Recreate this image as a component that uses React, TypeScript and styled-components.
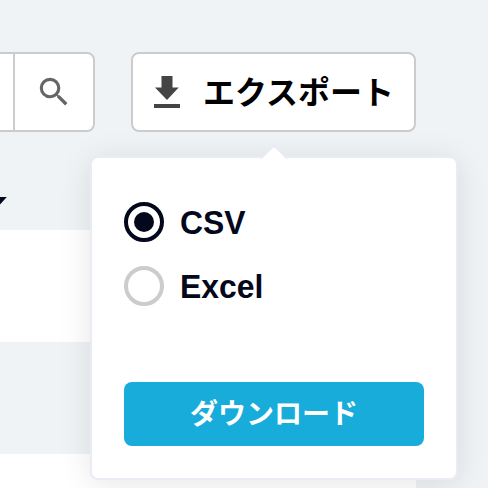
import React, { useState } from "react";
import styled, { createGlobalStyle } from "styled-components";

const GlobalStyle = createGlobalStyle`
  *, *::before, *::after { box-sizing: border-box; }
  body {
    margin: 0;
    overflow: hidden;
    background: #eff3f6;
    font-family: "Liberation Sans", "Noto Sans CJK JP", sans-serif;
  }
  button { font-family: inherit; margin: 0; padding: 0; }
`;

const Page = styled.main`
  width: 488px;
  height: 488px;
  overflow: hidden;
  display: flex;
  flex-direction: column;
  background: #eff3f6;
`;

const Toolbar = styled.header`
  display: flex;
  gap: 36px;
  padding-top: 52px;
`;

const SearchGroup = styled.div`
  display: flex;
  width: 95px;
  height: 80px;
  border: 2px solid #ccc;
  border-left: 0;
  border-radius: 0 8px 8px 0;
  background: #fff;
`;

const SearchField = styled.div`
  width: 15px;
  border-right: 2px solid #ccc;
`;

const SearchButton = styled.button`
  flex: 1;
  display: flex;
  align-items: center;
  justify-content: center;
  border: 0;
  background: none;
`;

const ExportAnchor = styled.div`
  position: relative;
`;

const ExportButton = styled.button`
  display: flex;
  align-items: center;
  width: 285px;
  height: 80px;
  padding-left: 20px;
  gap: 23px;
  border: 2px solid #ccc;
  border-radius: 8px;
  background: #fff;
  color: #000;
`;

const ExportLabel = styled.span`
  margin-left: -1px;
  padding-top: 2px;
  font-size: 32px;
  line-height: 40px;
  font-weight: 700;
  white-space: nowrap;
`;

const Popover = styled.section`
  position: absolute;
  top: 104px;
  left: -41px;
  width: 368px;
  height: 324px;
  padding: 44px 32px 32px;
  display: flex;
  flex-direction: column;
  border: 2px solid #e9ecf5;
  border-radius: 8px;
  background: #fff;
  box-shadow: 0 4px 32px rgba(0, 0, 0, 0.1);
`;

const Caret = styled.svg`
  position: absolute;
  top: -13px;
  left: 168px;
  display: block;
`;

const Options = styled.div`
  display: flex;
  flex-direction: column;
  gap: 24px;
`;

const Option = styled.label`
  display: flex;
  align-items: center;
  gap: 16px;
  height: 40px;
  font-size: 32.5px;
  font-weight: 700;
  color: #04081c;
`;

const Radio = styled.input`
  appearance: none;
  width: 40px;
  height: 40px;
  margin: 0;
  display: grid;
  place-items: center;
  border: 4px solid #ccc;
  border-radius: 50%;
  &:checked { border-color: #04081c; }
  &:checked::before {
    content: "";
    width: 20px;
    height: 20px;
    border-radius: 50%;
    background: #04081c;
  }
`;

const OptionText = styled.span`
  padding-top: 2px;
  transform: scaleX(0.98);
  transform-origin: left;
`;

const DownloadButton = styled.button`
  height: 64px;
  margin-top: auto;
  border: 0;
  border-radius: 8px;
  background: #18acda;
  color: #fff;
  font-size: 28px;
  line-height: 66px;
  font-weight: 700;
`;

const TableHead = styled.div`
  height: 98px;
  padding-top: 65px;
  flex: none;
`;

const TableRow = styled.div<{ $tinted?: boolean }>`
  flex: none;
  width: 416px;
  height: 112px;
  background: ${(p) => (p.$tinted ? "#eff3f6" : "#fff")};
`;

const SortMark = styled.svg`
  display: block;
`;

const formats = ["CSV", "Excel"];

export default function App() {
  const [format, setFormat] = useState("CSV");
  return (
    <>
      <GlobalStyle />
      <Page>
        <Toolbar>
          <SearchGroup>
            <SearchField />
            <SearchButton aria-label="検索">
              <svg width="38" height="38" viewBox="0 0 24 24" fill="#666">
                <path d="M15.5 14h-.79l-.28-.27A6.471 6.471 0 0 0 16 9.5 6.5 6.5 0 1 0 9.5 16c1.61 0 3.09-.59 4.23-1.57l.27.28v.79l5 4.99L20.49 19l-4.99-5zm-6 0C7.01 14 5 11.99 5 9.5S7.01 5 9.5 5 14 7.01 14 9.5 11.99 14 9.5 14z" />
              </svg>
            </SearchButton>
          </SearchGroup>
          <ExportAnchor>
            <ExportButton>
              <svg width="28" height="32" viewBox="0 0 28 32" fill="#444">
                <path d="M8.5 0h11v11.5h6.2L14 24 2 11.5h6.5zM1 28h26v4H1z" />
              </svg>
              <ExportLabel>エクスポート</ExportLabel>
            </ExportButton>
            <Popover>
              <Caret width="28" height="14" viewBox="0 0 28 14">
                <path d="M0 14 12.6 0.8Q14 -0.4 15.4 0.8L28 14z" fill="#e9ecf5" />
                <path d="M1.8 14 12.8 3Q14 2 15.2 3L26.2 14z" fill="#fff" />
              </Caret>
              <Options>
                {formats.map((name) => (
                  <Option key={name}>
                    <Radio
                      type="radio"
                      name="format"
                      checked={format === name}
                      onChange={() => setFormat(name)}
                    />
                    <OptionText>{name}</OptionText>
                  </Option>
                ))}
              </Options>
              <DownloadButton>ダウンロード</DownloadButton>
            </Popover>
          </ExportAnchor>
        </Toolbar>
        <TableHead>
          <SortMark width="7" height="9" viewBox="0 0 7 9">
            <path d="M0 0h6.8L0 7.6z" fill="#04081c" />
          </SortMark>
        </TableHead>
        <TableRow />
        <TableRow $tinted />
        <TableRow />
      </Page>
    </>
  );
}
